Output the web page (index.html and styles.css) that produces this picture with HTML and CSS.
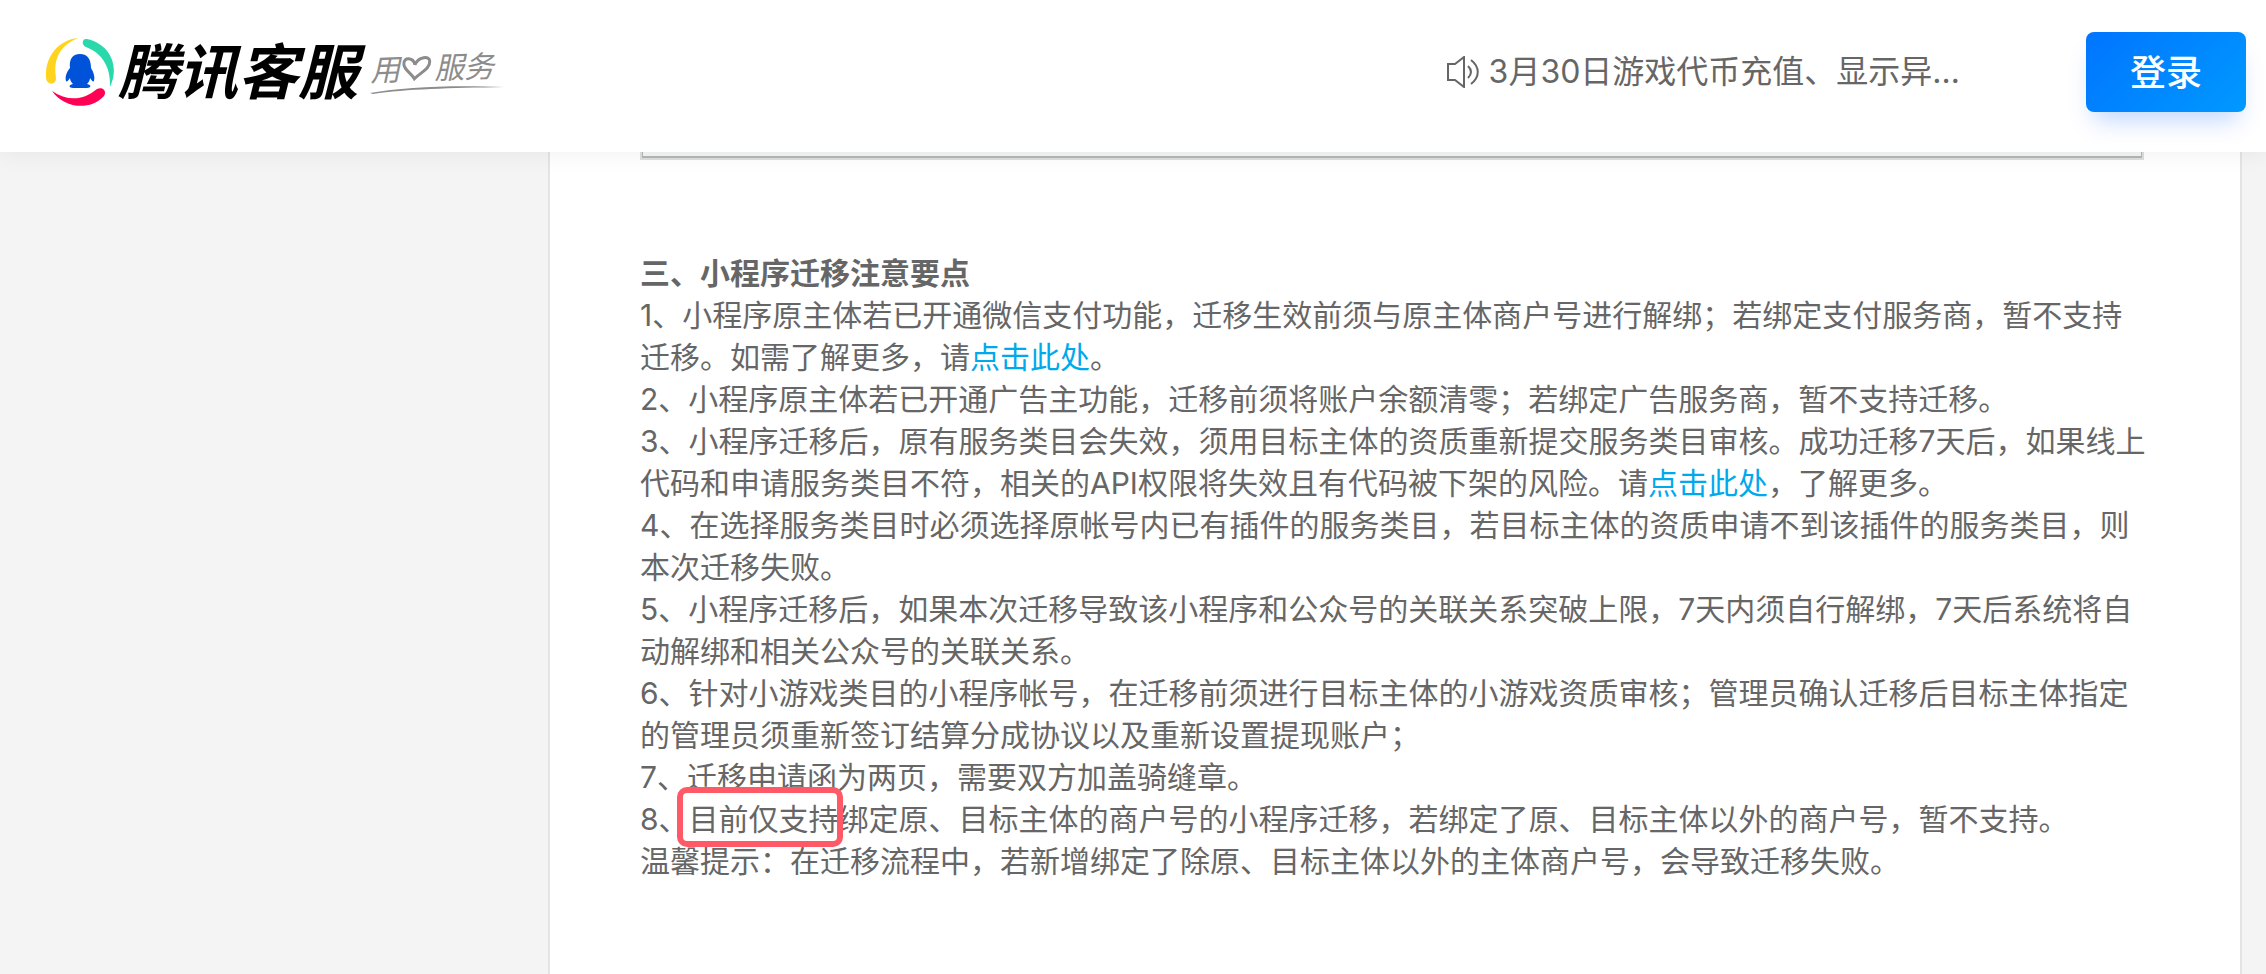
FILE: index.html
```html
<!DOCTYPE html>
<html lang="zh-CN">
<head>
    <meta charset="UTF-8">
    <meta name="viewport" content="width=device-width, initial-scale=1.0">
    <title>腾讯客服</title>
    <link rel="stylesheet" href="styles.css">
</head>
<body>
    <header class="header">
        <a class="logo" href="#">
            <svg class="logo-mark" viewBox="0 0 68 68" aria-hidden="true">
                <path fill="#ffd41f" d="M32 0C12 2-1 19 0 39c0 3 1 5 3 6 4 2 7-1 7-5C7 22 13 8 32 0Z"/>
                <path fill="#29d9ac" d="M41 1c-5-1-6 6-1 8 16 6 25 20 24 40 10-21 0-43-23-48Z"/>
                <path fill="#ff0055" d="M6 53c12 17 37 20 51 6 5-5 0-11-6-8-13 11-29 13-45 2Z"/>
                <path fill="#0052d9" d="M34 16c-8 0-11 6-10 14-4 5-5 9-4 13 1 1 2 0 4-3 0 2 1 4 3 6-5 1-4 4 0 4h14c4 0 5-3 0-4 2-2 3-4 3-6 2 3 3 4 4 3 1-4 0-8-3-13 0-8-3-14-11-14Z"/>
            </svg>
            <span class="logo-name">腾讯客服</span>
            <span class="slogan">
                <span class="slogan-text">
                    用
                    <svg class="heart" viewBox="0 0 30 26" aria-hidden="true">
                        <path d="M13 9C12 2 2 0 2 8c0 6 7 9 10 15C18 17 28 14 28 6c0-6-11-5-15 3"/>
                    </svg>
                    服务
                </span>
                <svg class="slogan-line" viewBox="0 0 134 8" aria-hidden="true">
                    <path d="M0 7C34 1 80-1 134 1 80 2 36 3 3 8Z"/>
                </svg>
            </span>
        </a>
        <a class="notice" href="#">
            <svg class="speaker" viewBox="0 0 32 32" aria-hidden="true">
                <path d="M1 8h7l9-7v30l-9-7H1Z"/>
                <path d="M21 10c4 4 4 8 0 12M24 4c9 7 9 17 0 24"/>
            </svg>
            <span>3月30日游戏代币充值、显示异…</span>
        </a>
        <button class="login" type="button">登录</button>
    </header>

    <main class="main">
        <article class="card">
            <div class="shot"></div>
            <h2>三、小程序迁移注意要点</h2>
            <p>1、小程序原主体若已开通微信支付功能，迁移生效前须与原主体商户号进行解绑；若绑定支付服务商，暂不支持迁移。如需了解更多，请<a href="#">点击此处</a>。</p>
            <p>2、小程序原主体若已开通广告主功能，迁移前须将账户余额清零；若绑定广告服务商，暂不支持迁移。</p>
            <p>3、小程序迁移后，原有服务类目会失效，须用目标主体的资质重新提交服务类目审核。成功迁移7天后，如果线上代码和申请服务类目不符，相关的API权限将失效且有代码被下架的风险。请<a href="#">点击此处</a>，了解更多。</p>
            <p>4、在选择服务类目时必须选择原帐号内已有插件的服务类目，若目标主体的资质申请不到该插件的服务类目，则本次迁移失败。</p>
            <p>5、小程序迁移后，如果本次迁移导致该小程序和公众号的关联关系突破上限，7天内须自行解绑，7天后系统将自动解绑和相关公众号的关联关系。</p>
            <p>6、针对小游戏类目的小程序帐号，在迁移前须进行目标主体的小游戏资质审核；管理员确认迁移后目标主体指定的管理员须重新签订结算分成协议以及重新设置提现账户；</p>
            <p>7、迁移申请函为两页，需要双方加盖骑缝章。</p>
            <p>8、<span class="marked">目前仅支持</span>绑定原、目标主体的商户号的小程序迁移，若绑定了原、目标主体以外的商户号，暂不支持。</p>
            <p>温馨提示：在迁移流程中，若新增绑定了除原、目标主体以外的主体商户号，会导致迁移失败。</p>
        </article>
    </main>
</body>
</html>
```
FILE: styles.css
```css
* {
    box-sizing: border-box;
}
body {
    margin: 0;
    min-height: 100vh;
    display: flex;
    flex-direction: column;
    background-color: #f4f4f4;
    color: #666;
    font-family: Inter, "Noto Sans CJK SC", sans-serif;
    font-size: 30px;
    line-height: 42px;
}
a {
    color: #00a9ec;
    text-decoration: none;
}

/* Header */
.header {
    position: sticky;
    top: 0;
    z-index: 1;
    display: flex;
    align-items: flex-start;
    height: 152px;
    padding: 32px 20px 0 46px;
    background-color: #fff;
    box-shadow: 0 4px 20px rgba(0, 0, 0, 0.05);
}
.logo {
    display: flex;
    align-items: center;
    height: 80px;
    color: #000;
}
.logo-mark {
    width: 68px;
    height: 68px;
}
.logo-name {
    margin-left: 4px;
    font-size: 60px;
    font-weight: 700;
    font-style: italic;
    line-height: 80px;
}
.slogan {
    margin-left: 12px;
    color: #8c8c8c;
    font-weight: 400;
    font-style: italic;
}
.slogan-text {
    display: flex;
    align-items: center;
    gap: 2px;
    line-height: 36px;
    transform: rotate(-2deg);
}
.heart {
    width: 30px;
    height: 26px;
    fill: none;
    stroke: #8c8c8c;
    stroke-width: 3;
}
.slogan-line {
    display: block;
    width: 134px;
    height: 8px;
    fill: #8c8c8c;
}
.notice {
    display: flex;
    align-items: center;
    gap: 10px;
    height: 80px;
    margin-left: auto;
    margin-right: 126px;
    color: #666;
    font-size: 32px;
    white-space: nowrap;
}
.speaker {
    width: 32px;
    height: 32px;
    fill: none;
    stroke: #666;
    stroke-width: 2;
}
.login {
    width: 160px;
    height: 80px;
    padding: 0 0 4px;
    border: none;
    border-radius: 8px;
    background: linear-gradient(135deg, #0075ff, #0099ff);
    box-shadow: 0 16px 24px -8px rgba(0, 90, 255, 0.25);
    color: #fff;
    font-family: inherit;
    font-size: 36px;
    font-weight: 500;
    cursor: pointer;
}

/* Article */
.main {
    flex: 1;
    display: flex;
    padding: 0 24px 0 548px;
}
.card {
    flex: 1;
    padding: 0 92px 92px 90px;
    border: solid #e4e4e4;
    border-width: 0 2px;
    background-color: #fff;
}
.shot {
    height: 8px;
    margin: 0 4px 92px 0;
    border: 2px solid #dedede;
    border-top: none;
    background-color: #f4f6f5;
    box-shadow: inset 1px -2px #b4b6b5, inset -1px 0 #b4b6b5;
}
h2,
p {
    margin: 0;
}
h2 {
    font-size: 30px;
    line-height: 42px;
}
/* Red frame drawn round the key phrase */
.marked {
    position: relative;
}
.marked::after {
    content: "";
    position: absolute;
    top: -14px;
    right: -4px;
    bottom: -10px;
    left: -12px;
    border: 6px solid #ff5866;
    border-radius: 10px;
}
```
